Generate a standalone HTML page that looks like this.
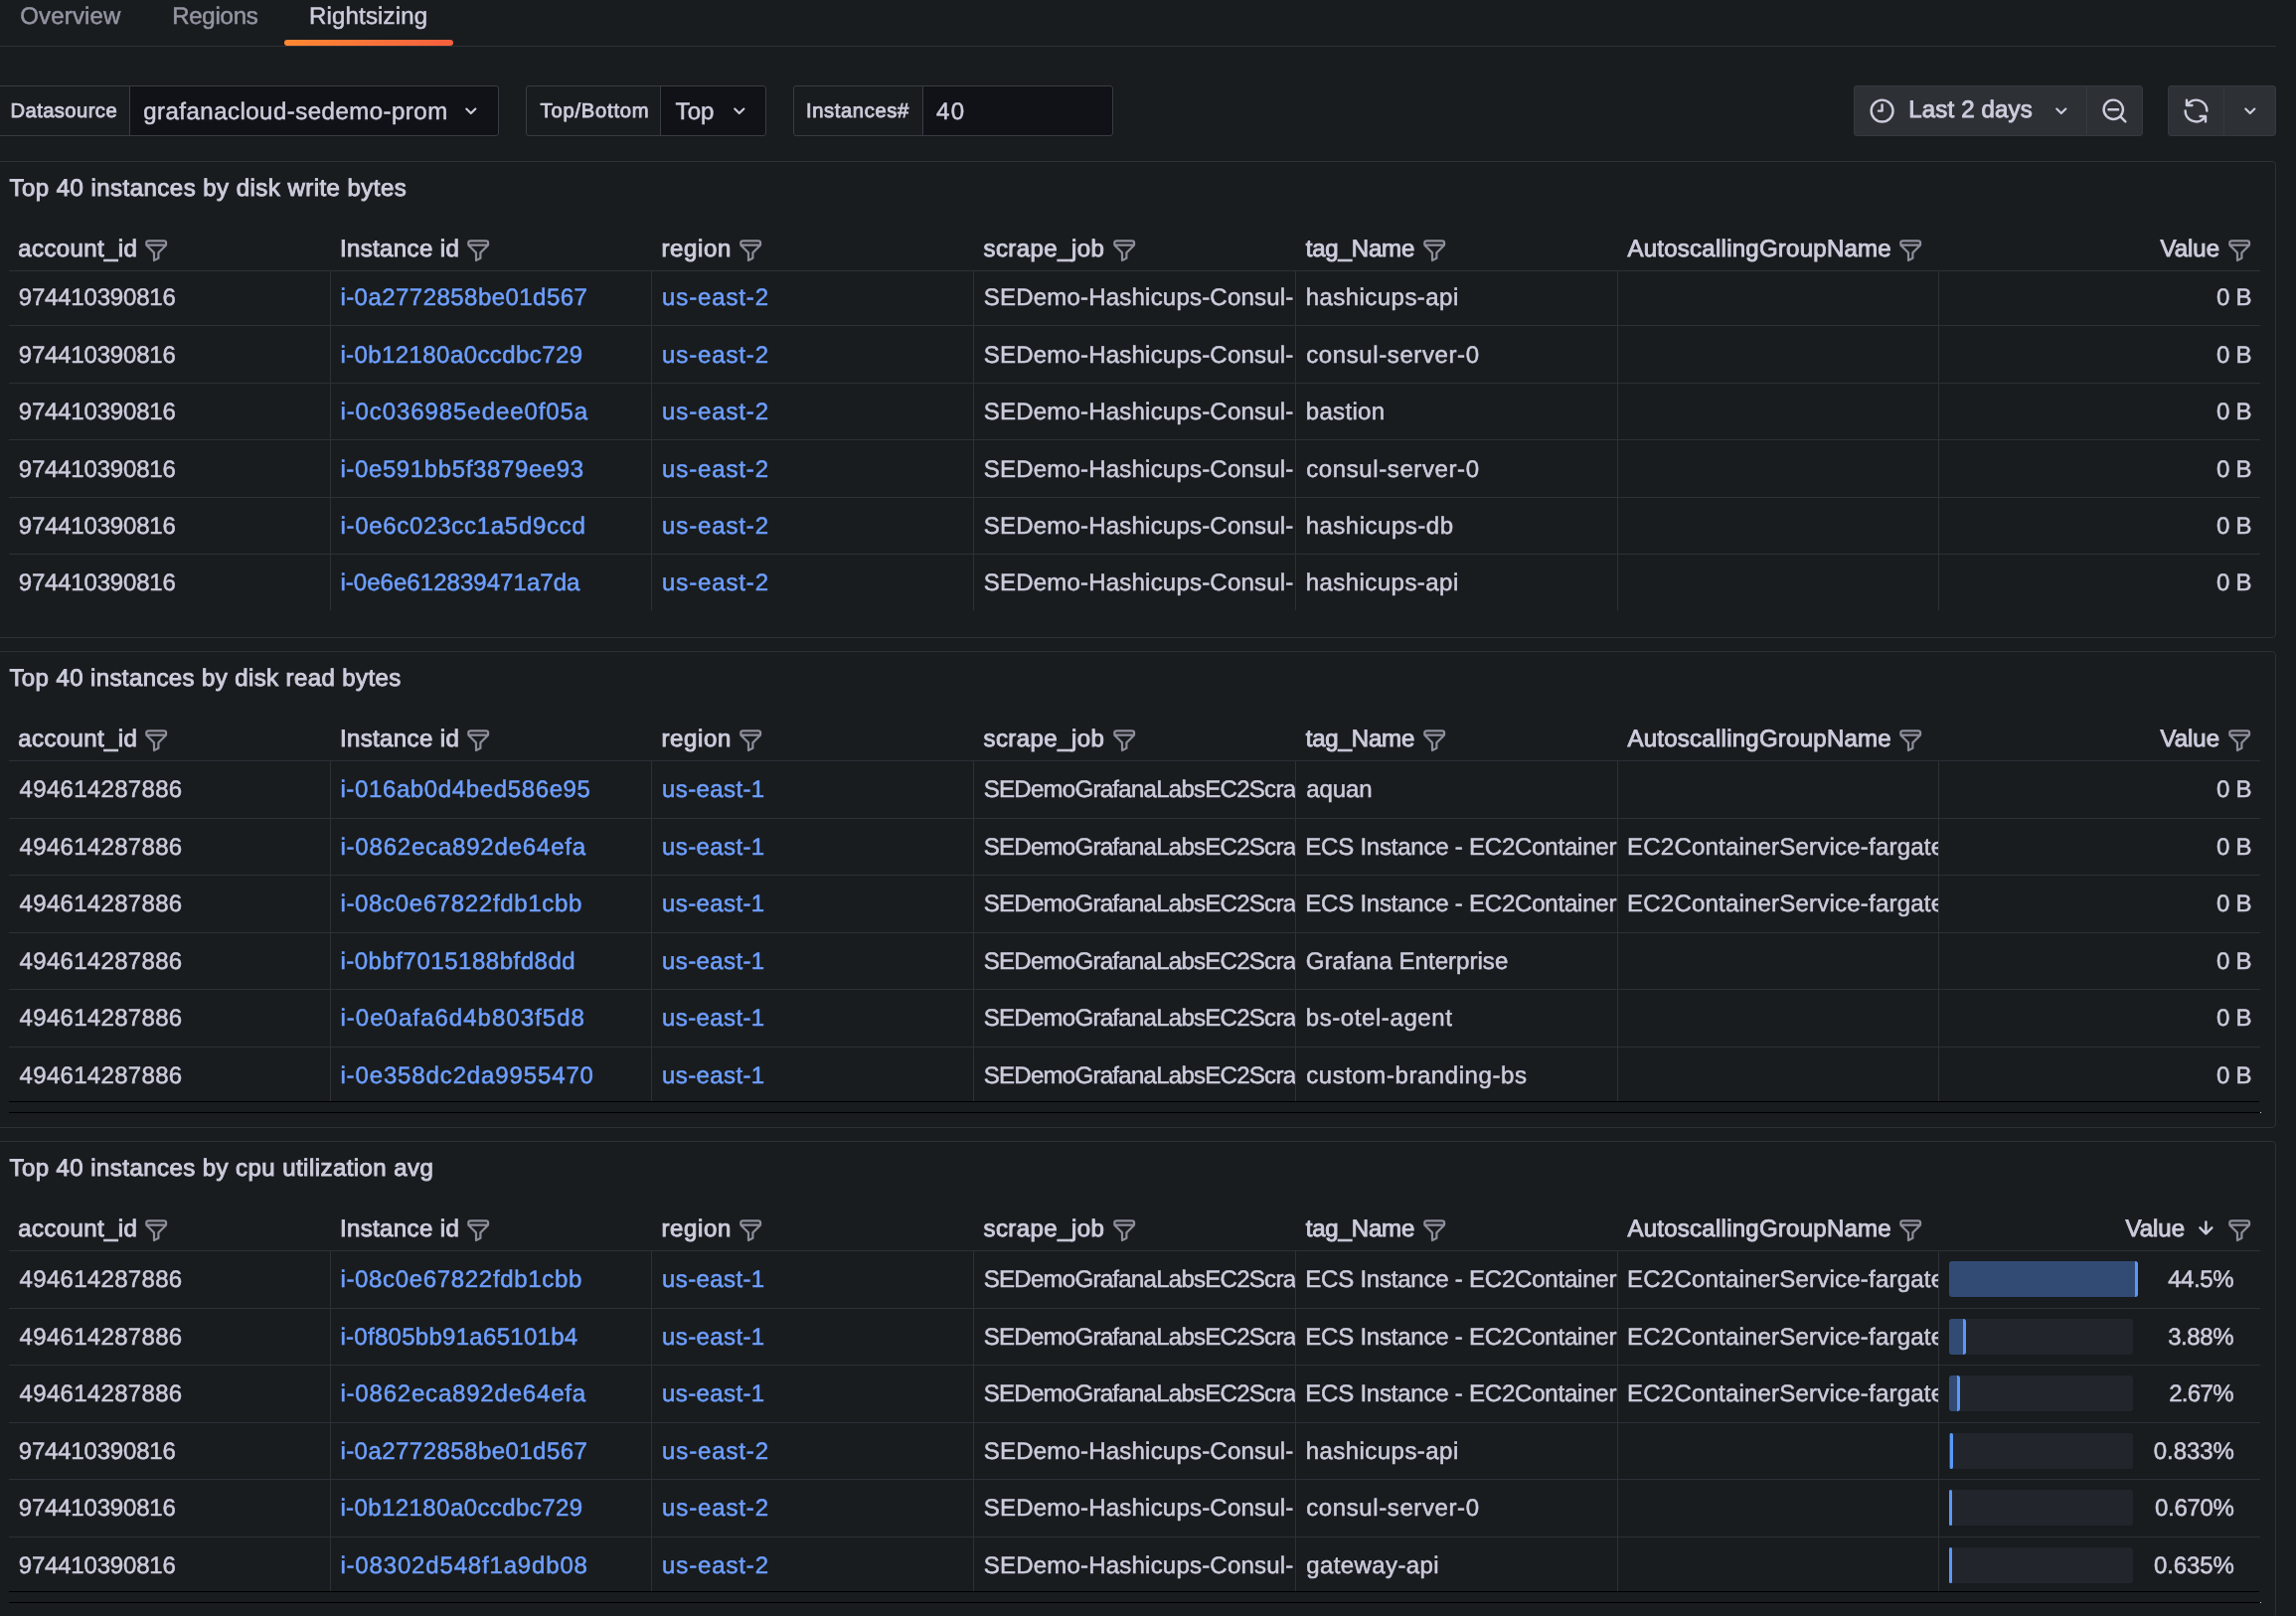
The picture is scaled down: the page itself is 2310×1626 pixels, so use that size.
<!DOCTYPE html>
<html lang="en"><head><meta charset="utf-8"><title>Rightsizing</title>
<style>
*{box-sizing:border-box;margin:0;padding:0}
html,body{width:2310px;height:1626px;overflow:hidden;background:#181c1f;}
body{font-family:"Liberation Sans",sans-serif;color:#ccccdc;position:relative}
div,span,svg,section{position:absolute}
.root{left:0;top:0;width:2310px;height:1626px;will-change:transform}
.tabs,.vars,.tc{left:0;top:0;width:2310px;height:0}
.t{white-space:pre;display:block;text-rendering:geometricPrecision}
.ln{background:#2d3036}
.bl{background:#000}
.dot{width:1.6px;height:1.6px;background:#fff;border-radius:1px}
.ul{border-radius:3px;background:linear-gradient(90deg,#ff8833,#f55f3e)}
.lab{border:1px solid #3a3c43;border-radius:3px 0 0 3px;background:#181c1f}
.sel{border:1px solid #3a3c43;border-radius:0 3px 3px 0;background:#111217}
.btn{background:#2d3035;border:1px solid #363940}
.panel{left:-4px;width:2294px;height:480px;border:1px solid #2d3036;border-radius:4px;background:#181c1f}
.tbl{left:-1px;top:-1px;width:2292px;overflow:hidden}
.row{left:0;width:2292px}
.cell{top:0;height:100%;overflow:hidden;border-right:1px solid #2d3036;box-sizing:content-box}
.cell.last{border-right:0}
.trk{background:#22252b;border-radius:3px}
.fill{background:#324b74;border-radius:3px;overflow:hidden}
.fill i{position:absolute;right:0;top:0;width:3px;height:100%;background:#5a98f8}
</style></head>
<body>
<div class="root">
<div class="tabs">
<div class="ln" style="left:0;top:46px;width:2290px;height:1px"></div>
<div class="ul" style="left:286px;top:40px;width:170px;height:6px"></div>
<span class="t" style="left:20.22px;top:5px;font-size:24px;line-height:24px;letter-spacing:0.167px;color:#9495a2;-webkit-text-stroke:0.5px #9495a2;">Overview</span>
<span class="t" style="left:173.18px;top:5px;font-size:24px;line-height:24px;letter-spacing:-0.245px;color:#9495a2;-webkit-text-stroke:0.5px #9495a2;">Regions</span>
<span class="t" style="left:310.98px;top:5px;font-size:24px;line-height:24px;letter-spacing:0.180px;color:#ccccdc;-webkit-text-stroke:0.5px #ccccdc;">Rightsizing</span>
</div>
<div class="vars">
<div class="lab" style="left:-6px;top:86px;width:137px;height:51px"></div>
<div class="sel" style="left:130px;top:86px;width:372px;height:51px"></div>
<span class="t" style="left:10.47px;top:102px;font-size:20.2px;line-height:20.2px;letter-spacing:0.434px;color:#ccccdc;-webkit-text-stroke:0.8px #ccccdc;">Datasource</span>
<span class="t" style="left:144.18px;top:101px;font-size:24px;line-height:24px;letter-spacing:0.484px;color:#ccccdc;-webkit-text-stroke:0.5px #ccccdc;">grafanacloud-sedemo-prom</span>
<svg class="ic" style="left:461.10px;top:99.30px" width="25.6" height="25.6" viewBox="0 0 24 24"><path fill="#ccccdc" d="M17,9.17a1,1,0,0,0-1.41,0L12,12.71,8.46,9.17a1,1,0,0,0-1.41,0,1,1,0,0,0,0,1.42l4.24,4.24a1,1,0,0,0,1.42,0L17,10.59A1,1,0,0,0,17,9.17Z"/></svg>
<div class="lab" style="left:529px;top:86px;width:136px;height:51px"></div>
<div class="sel" style="left:664px;top:86px;width:107px;height:51px"></div>
<span class="t" style="left:543.56px;top:102px;font-size:20.2px;line-height:20.2px;letter-spacing:0.775px;color:#ccccdc;-webkit-text-stroke:0.8px #ccccdc;">Top/Bottom</span>
<span class="t" style="left:679.58px;top:101px;font-size:24px;line-height:24px;letter-spacing:0.092px;color:#ccccdc;-webkit-text-stroke:0.5px #ccccdc;">Top</span>
<svg class="ic" style="left:730.80px;top:99.30px" width="25.6" height="25.6" viewBox="0 0 24 24"><path fill="#ccccdc" d="M17,9.17a1,1,0,0,0-1.41,0L12,12.71,8.46,9.17a1,1,0,0,0-1.41,0,1,1,0,0,0,0,1.42l4.24,4.24a1,1,0,0,0,1.42,0L17,10.59A1,1,0,0,0,17,9.17Z"/></svg>
<div class="lab" style="left:798px;top:86px;width:131px;height:51px"></div>
<div class="sel" style="left:928px;top:86px;width:192px;height:51px"></div>
<span class="t" style="left:810.97px;top:102px;font-size:20.2px;line-height:20.2px;letter-spacing:0.619px;color:#ccccdc;-webkit-text-stroke:0.8px #ccccdc;">Instances#</span>
<span class="t" style="left:942.08px;top:101px;font-size:24px;line-height:24px;letter-spacing:1.369px;color:#ccccdc;-webkit-text-stroke:0.5px #ccccdc;">40</span>
</div>
<div class="tc">
<div class="btn" style="left:1865px;top:86px;width:235px;height:51px;border-radius:3px 0 0 3px"></div>
<div class="btn" style="left:2099px;top:86px;width:57px;height:51px;border-radius:0 3px 3px 0"></div>
<div class="btn" style="left:2181px;top:86px;width:57px;height:51px;border-radius:3px 0 0 3px"></div>
<div class="btn" style="left:2237px;top:86px;width:53px;height:51px;border-radius:0 3px 3px 0"></div>
<svg class="ic" style="left:1878.60px;top:96.90px" width="29.2" height="29.2" viewBox="0 0 24 24"><path fill="#ccccdc" d="M12,2A10,10,0,1,0,22,12,10.01114,10.01114,0,0,0,12,2Zm0,18a8,8,0,1,1,8-8A8.00917,8.00917,0,0,1,12,20ZM12,6a.99974.99974,0,0,0-1,1v4H9a1,1,0,0,0,0,2h3a.99974.99974,0,0,0,1-1V7A.99974.99974,0,0,0,12,6Z"/></svg>
<span class="t" style="left:1920.37px;top:99px;font-size:24px;line-height:24px;letter-spacing:0.158px;color:#ccccdc;-webkit-text-stroke:0.9px #ccccdc;">Last 2 days</span>
<svg class="ic" style="left:2061.00px;top:99.00px" width="25.6" height="25.6" viewBox="0 0 24 24"><path fill="#ccccdc" d="M17,9.17a1,1,0,0,0-1.41,0L12,12.71,8.46,9.17a1,1,0,0,0-1.41,0,1,1,0,0,0,0,1.42l4.24,4.24a1,1,0,0,0,1.42,0L17,10.59A1,1,0,0,0,17,9.17Z"/></svg>
<svg class="ic" style="left:2112.90px;top:96.90px" width="29.0" height="29.0" viewBox="0 0 24 24"><path fill="#ccccdc" d="M21.71,20.29,18,16.61A9,9,0,1,0,16.61,18l3.68,3.68a1,1,0,0,0,1.42,0A1,1,0,0,0,21.71,20.29ZM11,18a7,7,0,1,1,7-7A7,7,0,0,1,11,18Zm4-8H7a1,1,0,0,0,0,2h8a1,1,0,0,0,0-2Z"/></svg>
<svg class="ic" style="left:2195.00px;top:96.90px" width="29.0" height="29.0" viewBox="0 0 24 24"><path fill="#ccccdc" d="M19.91,15.51H15.38a1,1,0,0,0,0,2h2.4A8,8,0,0,1,4,12a1,1,0,0,0-2,0,10,10,0,0,0,16.88,7.23V21a1,1,0,0,0,2,0V16.5A1,1,0,0,0,19.91,15.51ZM12,2A10,10,0,0,0,5.12,4.77V3a1,1,0,0,0-2,0V7.5a1,1,0,0,0,1,1h4.5a1,1,0,0,0,0-2H6.22A8,8,0,0,1,20,12a1,1,0,0,0,2,0A10,10,0,0,0,12,2Z"/></svg>
<svg class="ic" style="left:2250.70px;top:99.00px" width="25.6" height="25.6" viewBox="0 0 24 24"><path fill="#ccccdc" d="M17,9.17a1,1,0,0,0-1.41,0L12,12.71,8.46,9.17a1,1,0,0,0-1.41,0,1,1,0,0,0,0,1.42l4.24,4.24a1,1,0,0,0,1.42,0L17,10.59A1,1,0,0,0,17,9.17Z"/></svg>
</div>
<section class="panel" style="top:162px">
<span class="t" style="left:12.46px;top:15px;font-size:24px;line-height:24px;letter-spacing:0.471px;color:#ccccdc;-webkit-text-stroke:0.9px #ccccdc;">Top 40 instances by disk write bytes</span>
<div class="tbl" style="height:452px">
<span class="t" style="left:22.25px;top:77px;font-size:24px;line-height:24px;letter-spacing:0.397px;color:#ccccdc;-webkit-text-stroke:0.9px #ccccdc;">account_id</span>
<svg class="ic" style="left:148.10px;top:77.10px" width="26.4" height="26.4" viewBox="0 0 24 24"><path fill="#8d8e9a" d="M19,2H5A3,3,0,0,0,2,5V6.17a3,3,0,0,0,.25,1.2l0,.06a2.81,2.81,0,0,0,.59.86L9,14.41V21a1,1,0,0,0,.47.85A1,1,0,0,0,10,22a1,1,0,0,0,.45-.11l4-2A1,1,0,0,0,15,19V14.41l6.12-6.12a2.81,2.81,0,0,0,.59-.86l0-.06A3,3,0,0,0,22,6.17V5A3,3,0,0,0,19,2ZM13.29,13.29A1,1,0,0,0,13,14v4.38l-2,1V14a1,1,0,0,0-.29-.71L5.41,8H18.59ZM20,6H4V5A1,1,0,0,1,5,4H19a1,1,0,0,1,1,1Z"/></svg>
<span class="t" style="left:345.89px;top:77px;font-size:24px;line-height:24px;letter-spacing:0.383px;color:#ccccdc;-webkit-text-stroke:0.9px #ccccdc;">Instance id</span>
<svg class="ic" style="left:472.00px;top:77.10px" width="26.4" height="26.4" viewBox="0 0 24 24"><path fill="#8d8e9a" d="M19,2H5A3,3,0,0,0,2,5V6.17a3,3,0,0,0,.25,1.2l0,.06a2.81,2.81,0,0,0,.59.86L9,14.41V21a1,1,0,0,0,.47.85A1,1,0,0,0,10,22a1,1,0,0,0,.45-.11l4-2A1,1,0,0,0,15,19V14.41l6.12-6.12a2.81,2.81,0,0,0,.59-.86l0-.06A3,3,0,0,0,22,6.17V5A3,3,0,0,0,19,2ZM13.29,13.29A1,1,0,0,0,13,14v4.38l-2,1V14a1,1,0,0,0-.29-.71L5.41,8H18.59ZM20,6H4V5A1,1,0,0,1,5,4H19a1,1,0,0,1,1,1Z"/></svg>
<span class="t" style="left:669.41px;top:77px;font-size:24px;line-height:24px;letter-spacing:0.660px;color:#ccccdc;-webkit-text-stroke:0.9px #ccccdc;">region</span>
<svg class="ic" style="left:745.60px;top:77.10px" width="26.4" height="26.4" viewBox="0 0 24 24"><path fill="#8d8e9a" d="M19,2H5A3,3,0,0,0,2,5V6.17a3,3,0,0,0,.25,1.2l0,.06a2.81,2.81,0,0,0,.59.86L9,14.41V21a1,1,0,0,0,.47.85A1,1,0,0,0,10,22a1,1,0,0,0,.45-.11l4-2A1,1,0,0,0,15,19V14.41l6.12-6.12a2.81,2.81,0,0,0,.59-.86l0-.06A3,3,0,0,0,22,6.17V5A3,3,0,0,0,19,2ZM13.29,13.29A1,1,0,0,0,13,14v4.38l-2,1V14a1,1,0,0,0-.29-.71L5.41,8H18.59ZM20,6H4V5A1,1,0,0,1,5,4H19a1,1,0,0,1,1,1Z"/></svg>
<span class="t" style="left:993.47px;top:77px;font-size:24px;line-height:24px;letter-spacing:0.440px;color:#ccccdc;-webkit-text-stroke:0.9px #ccccdc;">scrape_job</span>
<svg class="ic" style="left:1121.60px;top:77.10px" width="26.4" height="26.4" viewBox="0 0 24 24"><path fill="#8d8e9a" d="M19,2H5A3,3,0,0,0,2,5V6.17a3,3,0,0,0,.25,1.2l0,.06a2.81,2.81,0,0,0,.59.86L9,14.41V21a1,1,0,0,0,.47.85A1,1,0,0,0,10,22a1,1,0,0,0,.45-.11l4-2A1,1,0,0,0,15,19V14.41l6.12-6.12a2.81,2.81,0,0,0,.59-.86l0-.06A3,3,0,0,0,22,6.17V5A3,3,0,0,0,19,2ZM13.29,13.29A1,1,0,0,0,13,14v4.38l-2,1V14a1,1,0,0,0-.29-.71L5.41,8H18.59ZM20,6H4V5A1,1,0,0,1,5,4H19a1,1,0,0,1,1,1Z"/></svg>
<span class="t" style="left:1317.68px;top:77px;font-size:24px;line-height:24px;letter-spacing:-0.162px;color:#ccccdc;-webkit-text-stroke:0.9px #ccccdc;">tag_Name</span>
<svg class="ic" style="left:1434.10px;top:77.10px" width="26.4" height="26.4" viewBox="0 0 24 24"><path fill="#8d8e9a" d="M19,2H5A3,3,0,0,0,2,5V6.17a3,3,0,0,0,.25,1.2l0,.06a2.81,2.81,0,0,0,.59.86L9,14.41V21a1,1,0,0,0,.47.85A1,1,0,0,0,10,22a1,1,0,0,0,.45-.11l4-2A1,1,0,0,0,15,19V14.41l6.12-6.12a2.81,2.81,0,0,0,.59-.86l0-.06A3,3,0,0,0,22,6.17V5A3,3,0,0,0,19,2ZM13.29,13.29A1,1,0,0,0,13,14v4.38l-2,1V14a1,1,0,0,0-.29-.71L5.41,8H18.59ZM20,6H4V5A1,1,0,0,1,5,4H19a1,1,0,0,1,1,1Z"/></svg>
<span class="t" style="left:1641.43px;top:77px;font-size:24px;line-height:24px;letter-spacing:0.258px;color:#ccccdc;-webkit-text-stroke:0.9px #ccccdc;">AutoscallingGroupName</span>
<svg class="ic" style="left:1913.40px;top:77.10px" width="26.4" height="26.4" viewBox="0 0 24 24"><path fill="#8d8e9a" d="M19,2H5A3,3,0,0,0,2,5V6.17a3,3,0,0,0,.25,1.2l0,.06a2.81,2.81,0,0,0,.59.86L9,14.41V21a1,1,0,0,0,.47.85A1,1,0,0,0,10,22a1,1,0,0,0,.45-.11l4-2A1,1,0,0,0,15,19V14.41l6.12-6.12a2.81,2.81,0,0,0,.59-.86l0-.06A3,3,0,0,0,22,6.17V5A3,3,0,0,0,19,2ZM13.29,13.29A1,1,0,0,0,13,14v4.38l-2,1V14a1,1,0,0,0-.29-.71L5.41,8H18.59ZM20,6H4V5A1,1,0,0,1,5,4H19a1,1,0,0,1,1,1Z"/></svg>
<span class="t" style="left:2177.42px;top:77px;font-size:24px;line-height:24px;letter-spacing:0.003px;color:#ccccdc;-webkit-text-stroke:0.9px #ccccdc;">Value</span>
<svg class="ic" style="left:2243.50px;top:77.10px" width="26.4" height="26.4" viewBox="0 0 24 24"><path fill="#8d8e9a" d="M19,2H5A3,3,0,0,0,2,5V6.17a3,3,0,0,0,.25,1.2l0,.06a2.81,2.81,0,0,0,.59.86L9,14.41V21a1,1,0,0,0,.47.85A1,1,0,0,0,10,22a1,1,0,0,0,.45-.11l4-2A1,1,0,0,0,15,19V14.41l6.12-6.12a2.81,2.81,0,0,0,.59-.86l0-.06A3,3,0,0,0,22,6.17V5A3,3,0,0,0,19,2ZM13.29,13.29A1,1,0,0,0,13,14v4.38l-2,1V14a1,1,0,0,0-.29-.71L5.41,8H18.59ZM20,6H4V5A1,1,0,0,1,5,4H19a1,1,0,0,1,1,1Z"/></svg>
<div class="ln" style="left:13px;top:110px;width:2265px;height:1px"></div>
<div class="row" style="top:111px;height:54px">
<div class="cell" style="left:13px;width:323px">
<span class="t" style="left:9.72px;top:15px;font-size:24px;line-height:24px;letter-spacing:-0.185px;color:#ccccdc;-webkit-text-stroke:0.5px #ccccdc;">974410390816</span>
</div>
<div class="cell" style="left:337px;width:322px">
<span class="t" style="left:9.38px;top:15px;font-size:24px;line-height:24px;letter-spacing:0.459px;color:#6e9fff;-webkit-text-stroke:0.5px #6e9fff;">i-0a2772858be01d567</span>
</div>
<div class="cell" style="left:660px;width:323px">
<span class="t" style="left:10.08px;top:15px;font-size:24px;line-height:24px;letter-spacing:0.857px;color:#6e9fff;-webkit-text-stroke:0.5px #6e9fff;">us-east-2</span>
</div>
<div class="cell" style="left:984px;width:323px">
<span class="t" style="left:9.79px;top:15px;font-size:24px;line-height:24px;letter-spacing:0.206px;color:#ccccdc;-webkit-text-stroke:0.5px #ccccdc;">SEDemo-Hashicups-Consul-</span>
</div>
<div class="cell" style="left:1308px;width:323px">
<span class="t" style="left:9.64px;top:15px;font-size:24px;line-height:24px;letter-spacing:0.462px;color:#ccccdc;-webkit-text-stroke:0.5px #ccccdc;">hashicups-api</span>
</div>
<div class="cell" style="left:1632px;width:322px">
</div>
<div class="cell last" style="left:1955px;width:323px">
<span class="t" style="left:279.09px;top:15px;font-size:24px;line-height:24px;letter-spacing:-0.283px;color:#ccccdc;-webkit-text-stroke:0.5px #ccccdc;">0 B</span>
</div>
</div>
<div class="ln" style="left:13px;top:165px;width:2265px;height:1px"></div>
<div class="row" style="top:166px;height:57px">
<div class="cell" style="left:13px;width:323px">
<span class="t" style="left:9.72px;top:18px;font-size:24px;line-height:24px;letter-spacing:-0.185px;color:#ccccdc;-webkit-text-stroke:0.5px #ccccdc;">974410390816</span>
</div>
<div class="cell" style="left:337px;width:322px">
<span class="t" style="left:9.38px;top:18px;font-size:24px;line-height:24px;letter-spacing:0.416px;color:#6e9fff;-webkit-text-stroke:0.5px #6e9fff;">i-0b12180a0ccdbc729</span>
</div>
<div class="cell" style="left:660px;width:323px">
<span class="t" style="left:10.08px;top:18px;font-size:24px;line-height:24px;letter-spacing:0.857px;color:#6e9fff;-webkit-text-stroke:0.5px #6e9fff;">us-east-2</span>
</div>
<div class="cell" style="left:984px;width:323px">
<span class="t" style="left:9.79px;top:18px;font-size:24px;line-height:24px;letter-spacing:0.206px;color:#ccccdc;-webkit-text-stroke:0.5px #ccccdc;">SEDemo-Hashicups-Consul-</span>
</div>
<div class="cell" style="left:1308px;width:323px">
<span class="t" style="left:10.17px;top:18px;font-size:24px;line-height:24px;letter-spacing:0.607px;color:#ccccdc;-webkit-text-stroke:0.5px #ccccdc;">consul-server-0</span>
</div>
<div class="cell" style="left:1632px;width:322px">
</div>
<div class="cell last" style="left:1955px;width:323px">
<span class="t" style="left:279.09px;top:18px;font-size:24px;line-height:24px;letter-spacing:-0.283px;color:#ccccdc;-webkit-text-stroke:0.5px #ccccdc;">0 B</span>
</div>
</div>
<div class="ln" style="left:13px;top:223px;width:2265px;height:1px"></div>
<div class="row" style="top:224px;height:56px">
<div class="cell" style="left:13px;width:323px">
<span class="t" style="left:9.72px;top:17px;font-size:24px;line-height:24px;letter-spacing:-0.185px;color:#ccccdc;-webkit-text-stroke:0.5px #ccccdc;">974410390816</span>
</div>
<div class="cell" style="left:337px;width:322px">
<span class="t" style="left:9.38px;top:17px;font-size:24px;line-height:24px;letter-spacing:0.924px;color:#6e9fff;-webkit-text-stroke:0.5px #6e9fff;">i-0c036985edee0f05a</span>
</div>
<div class="cell" style="left:660px;width:323px">
<span class="t" style="left:10.08px;top:17px;font-size:24px;line-height:24px;letter-spacing:0.857px;color:#6e9fff;-webkit-text-stroke:0.5px #6e9fff;">us-east-2</span>
</div>
<div class="cell" style="left:984px;width:323px">
<span class="t" style="left:9.79px;top:17px;font-size:24px;line-height:24px;letter-spacing:0.206px;color:#ccccdc;-webkit-text-stroke:0.5px #ccccdc;">SEDemo-Hashicups-Consul-</span>
</div>
<div class="cell" style="left:1308px;width:323px">
<span class="t" style="left:9.69px;top:17px;font-size:24px;line-height:24px;letter-spacing:0.345px;color:#ccccdc;-webkit-text-stroke:0.5px #ccccdc;">bastion</span>
</div>
<div class="cell" style="left:1632px;width:322px">
</div>
<div class="cell last" style="left:1955px;width:323px">
<span class="t" style="left:279.09px;top:17px;font-size:24px;line-height:24px;letter-spacing:-0.283px;color:#ccccdc;-webkit-text-stroke:0.5px #ccccdc;">0 B</span>
</div>
</div>
<div class="ln" style="left:13px;top:280px;width:2265px;height:1px"></div>
<div class="row" style="top:281px;height:57px">
<div class="cell" style="left:13px;width:323px">
<span class="t" style="left:9.72px;top:18px;font-size:24px;line-height:24px;letter-spacing:-0.185px;color:#ccccdc;-webkit-text-stroke:0.5px #ccccdc;">974410390816</span>
</div>
<div class="cell" style="left:337px;width:322px">
<span class="t" style="left:9.38px;top:18px;font-size:24px;line-height:24px;letter-spacing:0.624px;color:#6e9fff;-webkit-text-stroke:0.5px #6e9fff;">i-0e591bb5f3879ee93</span>
</div>
<div class="cell" style="left:660px;width:323px">
<span class="t" style="left:10.08px;top:18px;font-size:24px;line-height:24px;letter-spacing:0.857px;color:#6e9fff;-webkit-text-stroke:0.5px #6e9fff;">us-east-2</span>
</div>
<div class="cell" style="left:984px;width:323px">
<span class="t" style="left:9.79px;top:18px;font-size:24px;line-height:24px;letter-spacing:0.206px;color:#ccccdc;-webkit-text-stroke:0.5px #ccccdc;">SEDemo-Hashicups-Consul-</span>
</div>
<div class="cell" style="left:1308px;width:323px">
<span class="t" style="left:10.17px;top:18px;font-size:24px;line-height:24px;letter-spacing:0.607px;color:#ccccdc;-webkit-text-stroke:0.5px #ccccdc;">consul-server-0</span>
</div>
<div class="cell" style="left:1632px;width:322px">
</div>
<div class="cell last" style="left:1955px;width:323px">
<span class="t" style="left:279.09px;top:18px;font-size:24px;line-height:24px;letter-spacing:-0.283px;color:#ccccdc;-webkit-text-stroke:0.5px #ccccdc;">0 B</span>
</div>
</div>
<div class="ln" style="left:13px;top:338px;width:2265px;height:1px"></div>
<div class="row" style="top:339px;height:56px">
<div class="cell" style="left:13px;width:323px">
<span class="t" style="left:9.72px;top:17px;font-size:24px;line-height:24px;letter-spacing:-0.185px;color:#ccccdc;-webkit-text-stroke:0.5px #ccccdc;">974410390816</span>
</div>
<div class="cell" style="left:337px;width:322px">
<span class="t" style="left:9.38px;top:17px;font-size:24px;line-height:24px;letter-spacing:0.722px;color:#6e9fff;-webkit-text-stroke:0.5px #6e9fff;">i-0e6c023cc1a5d9ccd</span>
</div>
<div class="cell" style="left:660px;width:323px">
<span class="t" style="left:10.08px;top:17px;font-size:24px;line-height:24px;letter-spacing:0.857px;color:#6e9fff;-webkit-text-stroke:0.5px #6e9fff;">us-east-2</span>
</div>
<div class="cell" style="left:984px;width:323px">
<span class="t" style="left:9.79px;top:17px;font-size:24px;line-height:24px;letter-spacing:0.206px;color:#ccccdc;-webkit-text-stroke:0.5px #ccccdc;">SEDemo-Hashicups-Consul-</span>
</div>
<div class="cell" style="left:1308px;width:323px">
<span class="t" style="left:9.64px;top:17px;font-size:24px;line-height:24px;letter-spacing:0.512px;color:#ccccdc;-webkit-text-stroke:0.5px #ccccdc;">hashicups-db</span>
</div>
<div class="cell" style="left:1632px;width:322px">
</div>
<div class="cell last" style="left:1955px;width:323px">
<span class="t" style="left:279.09px;top:17px;font-size:24px;line-height:24px;letter-spacing:-0.283px;color:#ccccdc;-webkit-text-stroke:0.5px #ccccdc;">0 B</span>
</div>
</div>
<div class="ln" style="left:13px;top:395px;width:2265px;height:1px"></div>
<div class="row" style="top:396px;height:56px">
<div class="cell" style="left:13px;width:323px">
<span class="t" style="left:9.72px;top:17px;font-size:24px;line-height:24px;letter-spacing:-0.185px;color:#ccccdc;-webkit-text-stroke:0.5px #ccccdc;">974410390816</span>
</div>
<div class="cell" style="left:337px;width:322px">
<span class="t" style="left:9.38px;top:17px;font-size:24px;line-height:24px;letter-spacing:0.044px;color:#6e9fff;-webkit-text-stroke:0.5px #6e9fff;">i-0e6e612839471a7da</span>
</div>
<div class="cell" style="left:660px;width:323px">
<span class="t" style="left:10.08px;top:17px;font-size:24px;line-height:24px;letter-spacing:0.857px;color:#6e9fff;-webkit-text-stroke:0.5px #6e9fff;">us-east-2</span>
</div>
<div class="cell" style="left:984px;width:323px">
<span class="t" style="left:9.79px;top:17px;font-size:24px;line-height:24px;letter-spacing:0.206px;color:#ccccdc;-webkit-text-stroke:0.5px #ccccdc;">SEDemo-Hashicups-Consul-</span>
</div>
<div class="cell" style="left:1308px;width:323px">
<span class="t" style="left:9.64px;top:17px;font-size:24px;line-height:24px;letter-spacing:0.462px;color:#ccccdc;-webkit-text-stroke:0.5px #ccccdc;">hashicups-api</span>
</div>
<div class="cell" style="left:1632px;width:322px">
</div>
<div class="cell last" style="left:1955px;width:323px">
<span class="t" style="left:279.09px;top:17px;font-size:24px;line-height:24px;letter-spacing:-0.283px;color:#ccccdc;-webkit-text-stroke:0.5px #ccccdc;">0 B</span>
</div>
</div>
</div>
</section>
<section class="panel" style="top:655px">
<span class="t" style="left:12.46px;top:15px;font-size:24px;line-height:24px;letter-spacing:0.398px;color:#ccccdc;-webkit-text-stroke:0.9px #ccccdc;">Top 40 instances by disk read bytes</span>
<div class="tbl" style="height:465px">
<span class="t" style="left:22.25px;top:77px;font-size:24px;line-height:24px;letter-spacing:0.397px;color:#ccccdc;-webkit-text-stroke:0.9px #ccccdc;">account_id</span>
<svg class="ic" style="left:148.10px;top:77.10px" width="26.4" height="26.4" viewBox="0 0 24 24"><path fill="#8d8e9a" d="M19,2H5A3,3,0,0,0,2,5V6.17a3,3,0,0,0,.25,1.2l0,.06a2.81,2.81,0,0,0,.59.86L9,14.41V21a1,1,0,0,0,.47.85A1,1,0,0,0,10,22a1,1,0,0,0,.45-.11l4-2A1,1,0,0,0,15,19V14.41l6.12-6.12a2.81,2.81,0,0,0,.59-.86l0-.06A3,3,0,0,0,22,6.17V5A3,3,0,0,0,19,2ZM13.29,13.29A1,1,0,0,0,13,14v4.38l-2,1V14a1,1,0,0,0-.29-.71L5.41,8H18.59ZM20,6H4V5A1,1,0,0,1,5,4H19a1,1,0,0,1,1,1Z"/></svg>
<span class="t" style="left:345.89px;top:77px;font-size:24px;line-height:24px;letter-spacing:0.383px;color:#ccccdc;-webkit-text-stroke:0.9px #ccccdc;">Instance id</span>
<svg class="ic" style="left:472.00px;top:77.10px" width="26.4" height="26.4" viewBox="0 0 24 24"><path fill="#8d8e9a" d="M19,2H5A3,3,0,0,0,2,5V6.17a3,3,0,0,0,.25,1.2l0,.06a2.81,2.81,0,0,0,.59.86L9,14.41V21a1,1,0,0,0,.47.85A1,1,0,0,0,10,22a1,1,0,0,0,.45-.11l4-2A1,1,0,0,0,15,19V14.41l6.12-6.12a2.81,2.81,0,0,0,.59-.86l0-.06A3,3,0,0,0,22,6.17V5A3,3,0,0,0,19,2ZM13.29,13.29A1,1,0,0,0,13,14v4.38l-2,1V14a1,1,0,0,0-.29-.71L5.41,8H18.59ZM20,6H4V5A1,1,0,0,1,5,4H19a1,1,0,0,1,1,1Z"/></svg>
<span class="t" style="left:669.41px;top:77px;font-size:24px;line-height:24px;letter-spacing:0.660px;color:#ccccdc;-webkit-text-stroke:0.9px #ccccdc;">region</span>
<svg class="ic" style="left:745.60px;top:77.10px" width="26.4" height="26.4" viewBox="0 0 24 24"><path fill="#8d8e9a" d="M19,2H5A3,3,0,0,0,2,5V6.17a3,3,0,0,0,.25,1.2l0,.06a2.81,2.81,0,0,0,.59.86L9,14.41V21a1,1,0,0,0,.47.85A1,1,0,0,0,10,22a1,1,0,0,0,.45-.11l4-2A1,1,0,0,0,15,19V14.41l6.12-6.12a2.81,2.81,0,0,0,.59-.86l0-.06A3,3,0,0,0,22,6.17V5A3,3,0,0,0,19,2ZM13.29,13.29A1,1,0,0,0,13,14v4.38l-2,1V14a1,1,0,0,0-.29-.71L5.41,8H18.59ZM20,6H4V5A1,1,0,0,1,5,4H19a1,1,0,0,1,1,1Z"/></svg>
<span class="t" style="left:993.47px;top:77px;font-size:24px;line-height:24px;letter-spacing:0.440px;color:#ccccdc;-webkit-text-stroke:0.9px #ccccdc;">scrape_job</span>
<svg class="ic" style="left:1121.60px;top:77.10px" width="26.4" height="26.4" viewBox="0 0 24 24"><path fill="#8d8e9a" d="M19,2H5A3,3,0,0,0,2,5V6.17a3,3,0,0,0,.25,1.2l0,.06a2.81,2.81,0,0,0,.59.86L9,14.41V21a1,1,0,0,0,.47.85A1,1,0,0,0,10,22a1,1,0,0,0,.45-.11l4-2A1,1,0,0,0,15,19V14.41l6.12-6.12a2.81,2.81,0,0,0,.59-.86l0-.06A3,3,0,0,0,22,6.17V5A3,3,0,0,0,19,2ZM13.29,13.29A1,1,0,0,0,13,14v4.38l-2,1V14a1,1,0,0,0-.29-.71L5.41,8H18.59ZM20,6H4V5A1,1,0,0,1,5,4H19a1,1,0,0,1,1,1Z"/></svg>
<span class="t" style="left:1317.68px;top:77px;font-size:24px;line-height:24px;letter-spacing:-0.162px;color:#ccccdc;-webkit-text-stroke:0.9px #ccccdc;">tag_Name</span>
<svg class="ic" style="left:1434.10px;top:77.10px" width="26.4" height="26.4" viewBox="0 0 24 24"><path fill="#8d8e9a" d="M19,2H5A3,3,0,0,0,2,5V6.17a3,3,0,0,0,.25,1.2l0,.06a2.81,2.81,0,0,0,.59.86L9,14.41V21a1,1,0,0,0,.47.85A1,1,0,0,0,10,22a1,1,0,0,0,.45-.11l4-2A1,1,0,0,0,15,19V14.41l6.12-6.12a2.81,2.81,0,0,0,.59-.86l0-.06A3,3,0,0,0,22,6.17V5A3,3,0,0,0,19,2ZM13.29,13.29A1,1,0,0,0,13,14v4.38l-2,1V14a1,1,0,0,0-.29-.71L5.41,8H18.59ZM20,6H4V5A1,1,0,0,1,5,4H19a1,1,0,0,1,1,1Z"/></svg>
<span class="t" style="left:1641.43px;top:77px;font-size:24px;line-height:24px;letter-spacing:0.258px;color:#ccccdc;-webkit-text-stroke:0.9px #ccccdc;">AutoscallingGroupName</span>
<svg class="ic" style="left:1913.40px;top:77.10px" width="26.4" height="26.4" viewBox="0 0 24 24"><path fill="#8d8e9a" d="M19,2H5A3,3,0,0,0,2,5V6.17a3,3,0,0,0,.25,1.2l0,.06a2.81,2.81,0,0,0,.59.86L9,14.41V21a1,1,0,0,0,.47.85A1,1,0,0,0,10,22a1,1,0,0,0,.45-.11l4-2A1,1,0,0,0,15,19V14.41l6.12-6.12a2.81,2.81,0,0,0,.59-.86l0-.06A3,3,0,0,0,22,6.17V5A3,3,0,0,0,19,2ZM13.29,13.29A1,1,0,0,0,13,14v4.38l-2,1V14a1,1,0,0,0-.29-.71L5.41,8H18.59ZM20,6H4V5A1,1,0,0,1,5,4H19a1,1,0,0,1,1,1Z"/></svg>
<span class="t" style="left:2177.42px;top:77px;font-size:24px;line-height:24px;letter-spacing:0.003px;color:#ccccdc;-webkit-text-stroke:0.9px #ccccdc;">Value</span>
<svg class="ic" style="left:2243.50px;top:77.10px" width="26.4" height="26.4" viewBox="0 0 24 24"><path fill="#8d8e9a" d="M19,2H5A3,3,0,0,0,2,5V6.17a3,3,0,0,0,.25,1.2l0,.06a2.81,2.81,0,0,0,.59.86L9,14.41V21a1,1,0,0,0,.47.85A1,1,0,0,0,10,22a1,1,0,0,0,.45-.11l4-2A1,1,0,0,0,15,19V14.41l6.12-6.12a2.81,2.81,0,0,0,.59-.86l0-.06A3,3,0,0,0,22,6.17V5A3,3,0,0,0,19,2ZM13.29,13.29A1,1,0,0,0,13,14v4.38l-2,1V14a1,1,0,0,0-.29-.71L5.41,8H18.59ZM20,6H4V5A1,1,0,0,1,5,4H19a1,1,0,0,1,1,1Z"/></svg>
<div class="ln" style="left:13px;top:110px;width:2265px;height:1px"></div>
<div class="row" style="top:111px;height:57px">
<div class="cell" style="left:13px;width:323px">
<span class="t" style="left:10.58px;top:17px;font-size:24px;line-height:24px;letter-spacing:0.309px;color:#ccccdc;-webkit-text-stroke:0.5px #ccccdc;">494614287886</span>
</div>
<div class="cell" style="left:337px;width:322px">
<span class="t" style="left:9.38px;top:17px;font-size:24px;line-height:24px;letter-spacing:0.629px;color:#6e9fff;-webkit-text-stroke:0.5px #6e9fff;">i-016ab0d4bed586e95</span>
</div>
<div class="cell" style="left:660px;width:323px">
<span class="t" style="left:10.08px;top:17px;font-size:24px;line-height:24px;letter-spacing:0.380px;color:#6e9fff;-webkit-text-stroke:0.5px #6e9fff;">us-east-1</span>
</div>
<div class="cell" style="left:984px;width:323px">
<span class="t" style="left:9.79px;top:17px;font-size:24px;line-height:24px;letter-spacing:-0.722px;color:#ccccdc;-webkit-text-stroke:0.5px #ccccdc;">SEDemoGrafanaLabsEC2Scra</span>
</div>
<div class="cell" style="left:1308px;width:323px">
<span class="t" style="left:10.15px;top:17px;font-size:24px;line-height:24px;letter-spacing:-0.044px;color:#ccccdc;-webkit-text-stroke:0.5px #ccccdc;">aquan</span>
</div>
<div class="cell" style="left:1632px;width:322px">
</div>
<div class="cell last" style="left:1955px;width:323px">
<span class="t" style="left:279.09px;top:17px;font-size:24px;line-height:24px;letter-spacing:-0.283px;color:#ccccdc;-webkit-text-stroke:0.5px #ccccdc;">0 B</span>
</div>
</div>
<div class="ln" style="left:13px;top:168px;width:2265px;height:1px"></div>
<div class="row" style="top:169px;height:56px">
<div class="cell" style="left:13px;width:323px">
<span class="t" style="left:10.58px;top:17px;font-size:24px;line-height:24px;letter-spacing:0.309px;color:#ccccdc;-webkit-text-stroke:0.5px #ccccdc;">494614287886</span>
</div>
<div class="cell" style="left:337px;width:322px">
<span class="t" style="left:9.38px;top:17px;font-size:24px;line-height:24px;letter-spacing:0.808px;color:#6e9fff;-webkit-text-stroke:0.5px #6e9fff;">i-0862eca892de64efa</span>
</div>
<div class="cell" style="left:660px;width:323px">
<span class="t" style="left:10.08px;top:17px;font-size:24px;line-height:24px;letter-spacing:0.380px;color:#6e9fff;-webkit-text-stroke:0.5px #6e9fff;">us-east-1</span>
</div>
<div class="cell" style="left:984px;width:323px">
<span class="t" style="left:9.79px;top:17px;font-size:24px;line-height:24px;letter-spacing:-0.722px;color:#ccccdc;-webkit-text-stroke:0.5px #ccccdc;">SEDemoGrafanaLabsEC2Scra</span>
</div>
<div class="cell" style="left:1308px;width:323px">
<span class="t" style="left:9.28px;top:17px;font-size:24px;line-height:24px;letter-spacing:-0.217px;color:#ccccdc;-webkit-text-stroke:0.5px #ccccdc;">ECS Instance - EC2Container</span>
</div>
<div class="cell" style="left:1632px;width:322px">
<span class="t" style="left:9.08px;top:17px;font-size:24px;line-height:24px;letter-spacing:0.208px;color:#ccccdc;-webkit-text-stroke:0.5px #ccccdc;">EC2ContainerService-fargate</span>
</div>
<div class="cell last" style="left:1955px;width:323px">
<span class="t" style="left:279.09px;top:17px;font-size:24px;line-height:24px;letter-spacing:-0.283px;color:#ccccdc;-webkit-text-stroke:0.5px #ccccdc;">0 B</span>
</div>
</div>
<div class="ln" style="left:13px;top:225px;width:2265px;height:1px"></div>
<div class="row" style="top:226px;height:57px">
<div class="cell" style="left:13px;width:323px">
<span class="t" style="left:10.58px;top:17px;font-size:24px;line-height:24px;letter-spacing:0.309px;color:#ccccdc;-webkit-text-stroke:0.5px #ccccdc;">494614287886</span>
</div>
<div class="cell" style="left:337px;width:322px">
<span class="t" style="left:9.38px;top:17px;font-size:24px;line-height:24px;letter-spacing:0.672px;color:#6e9fff;-webkit-text-stroke:0.5px #6e9fff;">i-08c0e67822fdb1cbb</span>
</div>
<div class="cell" style="left:660px;width:323px">
<span class="t" style="left:10.08px;top:17px;font-size:24px;line-height:24px;letter-spacing:0.380px;color:#6e9fff;-webkit-text-stroke:0.5px #6e9fff;">us-east-1</span>
</div>
<div class="cell" style="left:984px;width:323px">
<span class="t" style="left:9.79px;top:17px;font-size:24px;line-height:24px;letter-spacing:-0.722px;color:#ccccdc;-webkit-text-stroke:0.5px #ccccdc;">SEDemoGrafanaLabsEC2Scra</span>
</div>
<div class="cell" style="left:1308px;width:323px">
<span class="t" style="left:9.28px;top:17px;font-size:24px;line-height:24px;letter-spacing:-0.217px;color:#ccccdc;-webkit-text-stroke:0.5px #ccccdc;">ECS Instance - EC2Container</span>
</div>
<div class="cell" style="left:1632px;width:322px">
<span class="t" style="left:9.08px;top:17px;font-size:24px;line-height:24px;letter-spacing:0.208px;color:#ccccdc;-webkit-text-stroke:0.5px #ccccdc;">EC2ContainerService-fargate</span>
</div>
<div class="cell last" style="left:1955px;width:323px">
<span class="t" style="left:279.09px;top:17px;font-size:24px;line-height:24px;letter-spacing:-0.283px;color:#ccccdc;-webkit-text-stroke:0.5px #ccccdc;">0 B</span>
</div>
</div>
<div class="ln" style="left:13px;top:283px;width:2265px;height:1px"></div>
<div class="row" style="top:284px;height:56px">
<div class="cell" style="left:13px;width:323px">
<span class="t" style="left:10.58px;top:17px;font-size:24px;line-height:24px;letter-spacing:0.309px;color:#ccccdc;-webkit-text-stroke:0.5px #ccccdc;">494614287886</span>
</div>
<div class="cell" style="left:337px;width:322px">
<span class="t" style="left:9.38px;top:17px;font-size:24px;line-height:24px;letter-spacing:0.523px;color:#6e9fff;-webkit-text-stroke:0.5px #6e9fff;">i-0bbf7015188bfd8dd</span>
</div>
<div class="cell" style="left:660px;width:323px">
<span class="t" style="left:10.08px;top:17px;font-size:24px;line-height:24px;letter-spacing:0.380px;color:#6e9fff;-webkit-text-stroke:0.5px #6e9fff;">us-east-1</span>
</div>
<div class="cell" style="left:984px;width:323px">
<span class="t" style="left:9.79px;top:17px;font-size:24px;line-height:24px;letter-spacing:-0.722px;color:#ccccdc;-webkit-text-stroke:0.5px #ccccdc;">SEDemoGrafanaLabsEC2Scra</span>
</div>
<div class="cell" style="left:1308px;width:323px">
<span class="t" style="left:9.81px;top:17px;font-size:24px;line-height:24px;letter-spacing:0.039px;color:#ccccdc;-webkit-text-stroke:0.5px #ccccdc;">Grafana Enterprise</span>
</div>
<div class="cell" style="left:1632px;width:322px">
</div>
<div class="cell last" style="left:1955px;width:323px">
<span class="t" style="left:279.09px;top:17px;font-size:24px;line-height:24px;letter-spacing:-0.283px;color:#ccccdc;-webkit-text-stroke:0.5px #ccccdc;">0 B</span>
</div>
</div>
<div class="ln" style="left:13px;top:340px;width:2265px;height:1px"></div>
<div class="row" style="top:341px;height:57px">
<div class="cell" style="left:13px;width:323px">
<span class="t" style="left:10.58px;top:17px;font-size:24px;line-height:24px;letter-spacing:0.309px;color:#ccccdc;-webkit-text-stroke:0.5px #ccccdc;">494614287886</span>
</div>
<div class="cell" style="left:337px;width:322px">
<span class="t" style="left:9.38px;top:17px;font-size:24px;line-height:24px;letter-spacing:1.034px;color:#6e9fff;-webkit-text-stroke:0.5px #6e9fff;">i-0e0afa6d4b803f5d8</span>
</div>
<div class="cell" style="left:660px;width:323px">
<span class="t" style="left:10.08px;top:17px;font-size:24px;line-height:24px;letter-spacing:0.380px;color:#6e9fff;-webkit-text-stroke:0.5px #6e9fff;">us-east-1</span>
</div>
<div class="cell" style="left:984px;width:323px">
<span class="t" style="left:9.79px;top:17px;font-size:24px;line-height:24px;letter-spacing:-0.722px;color:#ccccdc;-webkit-text-stroke:0.5px #ccccdc;">SEDemoGrafanaLabsEC2Scra</span>
</div>
<div class="cell" style="left:1308px;width:323px">
<span class="t" style="left:9.69px;top:17px;font-size:24px;line-height:24px;letter-spacing:0.591px;color:#ccccdc;-webkit-text-stroke:0.5px #ccccdc;">bs-otel-agent</span>
</div>
<div class="cell" style="left:1632px;width:322px">
</div>
<div class="cell last" style="left:1955px;width:323px">
<span class="t" style="left:279.09px;top:17px;font-size:24px;line-height:24px;letter-spacing:-0.283px;color:#ccccdc;-webkit-text-stroke:0.5px #ccccdc;">0 B</span>
</div>
</div>
<div class="ln" style="left:13px;top:398px;width:2265px;height:1px"></div>
<div class="row" style="top:399px;height:54px">
<div class="cell" style="left:13px;width:323px">
<span class="t" style="left:10.58px;top:17px;font-size:24px;line-height:24px;letter-spacing:0.309px;color:#ccccdc;-webkit-text-stroke:0.5px #ccccdc;">494614287886</span>
</div>
<div class="cell" style="left:337px;width:322px">
<span class="t" style="left:9.38px;top:17px;font-size:24px;line-height:24px;letter-spacing:0.872px;color:#6e9fff;-webkit-text-stroke:0.5px #6e9fff;">i-0e358dc2da9955470</span>
</div>
<div class="cell" style="left:660px;width:323px">
<span class="t" style="left:10.08px;top:17px;font-size:24px;line-height:24px;letter-spacing:0.380px;color:#6e9fff;-webkit-text-stroke:0.5px #6e9fff;">us-east-1</span>
</div>
<div class="cell" style="left:984px;width:323px">
<span class="t" style="left:9.79px;top:17px;font-size:24px;line-height:24px;letter-spacing:-0.722px;color:#ccccdc;-webkit-text-stroke:0.5px #ccccdc;">SEDemoGrafanaLabsEC2Scra</span>
</div>
<div class="cell" style="left:1308px;width:323px">
<span class="t" style="left:10.17px;top:17px;font-size:24px;line-height:24px;letter-spacing:0.567px;color:#ccccdc;-webkit-text-stroke:0.5px #ccccdc;">custom-branding-bs</span>
</div>
<div class="cell" style="left:1632px;width:322px">
</div>
<div class="cell last" style="left:1955px;width:323px">
<span class="t" style="left:279.09px;top:17px;font-size:24px;line-height:24px;letter-spacing:-0.283px;color:#ccccdc;-webkit-text-stroke:0.5px #ccccdc;">0 B</span>
</div>
</div>
<div class="bl" style="left:13px;top:453px;width:2264px;height:1px"></div>
<div class="bl" style="left:13px;top:464px;width:2265px;height:1px"></div>
<div class="dot" style="left:2277.5px;top:463.7px"></div>
</div>
</section>
<section class="panel" style="top:1148px">
<span class="t" style="left:12.46px;top:15px;font-size:24px;line-height:24px;letter-spacing:0.442px;color:#ccccdc;-webkit-text-stroke:0.9px #ccccdc;">Top 40 instances by cpu utilization avg</span>
<div class="tbl" style="height:465px">
<span class="t" style="left:22.25px;top:77px;font-size:24px;line-height:24px;letter-spacing:0.397px;color:#ccccdc;-webkit-text-stroke:0.9px #ccccdc;">account_id</span>
<svg class="ic" style="left:148.10px;top:77.10px" width="26.4" height="26.4" viewBox="0 0 24 24"><path fill="#8d8e9a" d="M19,2H5A3,3,0,0,0,2,5V6.17a3,3,0,0,0,.25,1.2l0,.06a2.81,2.81,0,0,0,.59.86L9,14.41V21a1,1,0,0,0,.47.85A1,1,0,0,0,10,22a1,1,0,0,0,.45-.11l4-2A1,1,0,0,0,15,19V14.41l6.12-6.12a2.81,2.81,0,0,0,.59-.86l0-.06A3,3,0,0,0,22,6.17V5A3,3,0,0,0,19,2ZM13.29,13.29A1,1,0,0,0,13,14v4.38l-2,1V14a1,1,0,0,0-.29-.71L5.41,8H18.59ZM20,6H4V5A1,1,0,0,1,5,4H19a1,1,0,0,1,1,1Z"/></svg>
<span class="t" style="left:345.89px;top:77px;font-size:24px;line-height:24px;letter-spacing:0.383px;color:#ccccdc;-webkit-text-stroke:0.9px #ccccdc;">Instance id</span>
<svg class="ic" style="left:472.00px;top:77.10px" width="26.4" height="26.4" viewBox="0 0 24 24"><path fill="#8d8e9a" d="M19,2H5A3,3,0,0,0,2,5V6.17a3,3,0,0,0,.25,1.2l0,.06a2.81,2.81,0,0,0,.59.86L9,14.41V21a1,1,0,0,0,.47.85A1,1,0,0,0,10,22a1,1,0,0,0,.45-.11l4-2A1,1,0,0,0,15,19V14.41l6.12-6.12a2.81,2.81,0,0,0,.59-.86l0-.06A3,3,0,0,0,22,6.17V5A3,3,0,0,0,19,2ZM13.29,13.29A1,1,0,0,0,13,14v4.38l-2,1V14a1,1,0,0,0-.29-.71L5.41,8H18.59ZM20,6H4V5A1,1,0,0,1,5,4H19a1,1,0,0,1,1,1Z"/></svg>
<span class="t" style="left:669.41px;top:77px;font-size:24px;line-height:24px;letter-spacing:0.660px;color:#ccccdc;-webkit-text-stroke:0.9px #ccccdc;">region</span>
<svg class="ic" style="left:745.60px;top:77.10px" width="26.4" height="26.4" viewBox="0 0 24 24"><path fill="#8d8e9a" d="M19,2H5A3,3,0,0,0,2,5V6.17a3,3,0,0,0,.25,1.2l0,.06a2.81,2.81,0,0,0,.59.86L9,14.41V21a1,1,0,0,0,.47.85A1,1,0,0,0,10,22a1,1,0,0,0,.45-.11l4-2A1,1,0,0,0,15,19V14.41l6.12-6.12a2.81,2.81,0,0,0,.59-.86l0-.06A3,3,0,0,0,22,6.17V5A3,3,0,0,0,19,2ZM13.29,13.29A1,1,0,0,0,13,14v4.38l-2,1V14a1,1,0,0,0-.29-.71L5.41,8H18.59ZM20,6H4V5A1,1,0,0,1,5,4H19a1,1,0,0,1,1,1Z"/></svg>
<span class="t" style="left:993.47px;top:77px;font-size:24px;line-height:24px;letter-spacing:0.440px;color:#ccccdc;-webkit-text-stroke:0.9px #ccccdc;">scrape_job</span>
<svg class="ic" style="left:1121.60px;top:77.10px" width="26.4" height="26.4" viewBox="0 0 24 24"><path fill="#8d8e9a" d="M19,2H5A3,3,0,0,0,2,5V6.17a3,3,0,0,0,.25,1.2l0,.06a2.81,2.81,0,0,0,.59.86L9,14.41V21a1,1,0,0,0,.47.85A1,1,0,0,0,10,22a1,1,0,0,0,.45-.11l4-2A1,1,0,0,0,15,19V14.41l6.12-6.12a2.81,2.81,0,0,0,.59-.86l0-.06A3,3,0,0,0,22,6.17V5A3,3,0,0,0,19,2ZM13.29,13.29A1,1,0,0,0,13,14v4.38l-2,1V14a1,1,0,0,0-.29-.71L5.41,8H18.59ZM20,6H4V5A1,1,0,0,1,5,4H19a1,1,0,0,1,1,1Z"/></svg>
<span class="t" style="left:1317.68px;top:77px;font-size:24px;line-height:24px;letter-spacing:-0.162px;color:#ccccdc;-webkit-text-stroke:0.9px #ccccdc;">tag_Name</span>
<svg class="ic" style="left:1434.10px;top:77.10px" width="26.4" height="26.4" viewBox="0 0 24 24"><path fill="#8d8e9a" d="M19,2H5A3,3,0,0,0,2,5V6.17a3,3,0,0,0,.25,1.2l0,.06a2.81,2.81,0,0,0,.59.86L9,14.41V21a1,1,0,0,0,.47.85A1,1,0,0,0,10,22a1,1,0,0,0,.45-.11l4-2A1,1,0,0,0,15,19V14.41l6.12-6.12a2.81,2.81,0,0,0,.59-.86l0-.06A3,3,0,0,0,22,6.17V5A3,3,0,0,0,19,2ZM13.29,13.29A1,1,0,0,0,13,14v4.38l-2,1V14a1,1,0,0,0-.29-.71L5.41,8H18.59ZM20,6H4V5A1,1,0,0,1,5,4H19a1,1,0,0,1,1,1Z"/></svg>
<span class="t" style="left:1641.43px;top:77px;font-size:24px;line-height:24px;letter-spacing:0.258px;color:#ccccdc;-webkit-text-stroke:0.9px #ccccdc;">AutoscallingGroupName</span>
<svg class="ic" style="left:1913.40px;top:77.10px" width="26.4" height="26.4" viewBox="0 0 24 24"><path fill="#8d8e9a" d="M19,2H5A3,3,0,0,0,2,5V6.17a3,3,0,0,0,.25,1.2l0,.06a2.81,2.81,0,0,0,.59.86L9,14.41V21a1,1,0,0,0,.47.85A1,1,0,0,0,10,22a1,1,0,0,0,.45-.11l4-2A1,1,0,0,0,15,19V14.41l6.12-6.12a2.81,2.81,0,0,0,.59-.86l0-.06A3,3,0,0,0,22,6.17V5A3,3,0,0,0,19,2ZM13.29,13.29A1,1,0,0,0,13,14v4.38l-2,1V14a1,1,0,0,0-.29-.71L5.41,8H18.59ZM20,6H4V5A1,1,0,0,1,5,4H19a1,1,0,0,1,1,1Z"/></svg>
<span class="t" style="left:2142.42px;top:77px;font-size:24px;line-height:24px;letter-spacing:0.003px;color:#ccccdc;-webkit-text-stroke:0.9px #ccccdc;">Value</span>
<svg class="ic" style="left:2209.00px;top:73.20px" width="28.8" height="28.8" viewBox="0 0 24 24"><path fill="#ccccdc" d="M17.71,11.29a1,1,0,0,0-1.42,0L13,14.59V7a1,1,0,0,0-2,0v7.59l-3.29-3.3a1,1,0,0,0-1.42,1.42l5,5a1,1,0,0,0,.33.21.94.94,0,0,0,.76,0,1,1,0,0,0,.33-.21l5-5A1,1,0,0,0,17.71,11.29Z"/></svg>
<svg class="ic" style="left:2243.50px;top:77.10px" width="26.4" height="26.4" viewBox="0 0 24 24"><path fill="#8d8e9a" d="M19,2H5A3,3,0,0,0,2,5V6.17a3,3,0,0,0,.25,1.2l0,.06a2.81,2.81,0,0,0,.59.86L9,14.41V21a1,1,0,0,0,.47.85A1,1,0,0,0,10,22a1,1,0,0,0,.45-.11l4-2A1,1,0,0,0,15,19V14.41l6.12-6.12a2.81,2.81,0,0,0,.59-.86l0-.06A3,3,0,0,0,22,6.17V5A3,3,0,0,0,19,2ZM13.29,13.29A1,1,0,0,0,13,14v4.38l-2,1V14a1,1,0,0,0-.29-.71L5.41,8H18.59ZM20,6H4V5A1,1,0,0,1,5,4H19a1,1,0,0,1,1,1Z"/></svg>
<div class="ln" style="left:13px;top:110px;width:2265px;height:1px"></div>
<div class="row" style="top:111px;height:57px">
<div class="cell" style="left:13px;width:323px">
<span class="t" style="left:10.58px;top:17px;font-size:24px;line-height:24px;letter-spacing:0.309px;color:#ccccdc;-webkit-text-stroke:0.5px #ccccdc;">494614287886</span>
</div>
<div class="cell" style="left:337px;width:322px">
<span class="t" style="left:9.38px;top:17px;font-size:24px;line-height:24px;letter-spacing:0.672px;color:#6e9fff;-webkit-text-stroke:0.5px #6e9fff;">i-08c0e67822fdb1cbb</span>
</div>
<div class="cell" style="left:660px;width:323px">
<span class="t" style="left:10.08px;top:17px;font-size:24px;line-height:24px;letter-spacing:0.380px;color:#6e9fff;-webkit-text-stroke:0.5px #6e9fff;">us-east-1</span>
</div>
<div class="cell" style="left:984px;width:323px">
<span class="t" style="left:9.79px;top:17px;font-size:24px;line-height:24px;letter-spacing:-0.722px;color:#ccccdc;-webkit-text-stroke:0.5px #ccccdc;">SEDemoGrafanaLabsEC2Scra</span>
</div>
<div class="cell" style="left:1308px;width:323px">
<span class="t" style="left:9.28px;top:17px;font-size:24px;line-height:24px;letter-spacing:-0.217px;color:#ccccdc;-webkit-text-stroke:0.5px #ccccdc;">ECS Instance - EC2Container</span>
</div>
<div class="cell" style="left:1632px;width:322px">
<span class="t" style="left:9.08px;top:17px;font-size:24px;line-height:24px;letter-spacing:0.208px;color:#ccccdc;-webkit-text-stroke:0.5px #ccccdc;">EC2ContainerService-fargate</span>
</div>
<div class="cell last" style="left:1955px;width:323px">
<span class="t" style="left:230.18px;top:17px;font-size:24px;line-height:24px;letter-spacing:-0.398px;color:#ccccdc;-webkit-text-stroke:0.5px #ccccdc;">44.5%</span>
<div class="fill" style="left:10px;top:10px;width:190px;height:36px"><i></i></div>
</div>
</div>
<div class="ln" style="left:13px;top:168px;width:2265px;height:1px"></div>
<div class="row" style="top:169px;height:56px">
<div class="cell" style="left:13px;width:323px">
<span class="t" style="left:10.58px;top:17px;font-size:24px;line-height:24px;letter-spacing:0.309px;color:#ccccdc;-webkit-text-stroke:0.5px #ccccdc;">494614287886</span>
</div>
<div class="cell" style="left:337px;width:322px">
<span class="t" style="left:9.38px;top:17px;font-size:24px;line-height:24px;letter-spacing:0.293px;color:#6e9fff;-webkit-text-stroke:0.5px #6e9fff;">i-0f805bb91a65101b4</span>
</div>
<div class="cell" style="left:660px;width:323px">
<span class="t" style="left:10.08px;top:17px;font-size:24px;line-height:24px;letter-spacing:0.380px;color:#6e9fff;-webkit-text-stroke:0.5px #6e9fff;">us-east-1</span>
</div>
<div class="cell" style="left:984px;width:323px">
<span class="t" style="left:9.79px;top:17px;font-size:24px;line-height:24px;letter-spacing:-0.722px;color:#ccccdc;-webkit-text-stroke:0.5px #ccccdc;">SEDemoGrafanaLabsEC2Scra</span>
</div>
<div class="cell" style="left:1308px;width:323px">
<span class="t" style="left:9.28px;top:17px;font-size:24px;line-height:24px;letter-spacing:-0.217px;color:#ccccdc;-webkit-text-stroke:0.5px #ccccdc;">ECS Instance - EC2Container</span>
</div>
<div class="cell" style="left:1632px;width:322px">
<span class="t" style="left:9.08px;top:17px;font-size:24px;line-height:24px;letter-spacing:0.208px;color:#ccccdc;-webkit-text-stroke:0.5px #ccccdc;">EC2ContainerService-fargate</span>
</div>
<div class="cell last" style="left:1955px;width:323px">
<span class="t" style="left:230.14px;top:17px;font-size:24px;line-height:24px;letter-spacing:-0.386px;color:#ccccdc;-webkit-text-stroke:0.5px #ccccdc;">3.88%</span>
<div class="trk" style="left:10px;top:10px;width:185px;height:36px"></div>
<div class="fill" style="left:10px;top:10px;width:17px;height:36px"><i></i></div>
</div>
</div>
<div class="ln" style="left:13px;top:225px;width:2265px;height:1px"></div>
<div class="row" style="top:226px;height:57px">
<div class="cell" style="left:13px;width:323px">
<span class="t" style="left:10.58px;top:17px;font-size:24px;line-height:24px;letter-spacing:0.309px;color:#ccccdc;-webkit-text-stroke:0.5px #ccccdc;">494614287886</span>
</div>
<div class="cell" style="left:337px;width:322px">
<span class="t" style="left:9.38px;top:17px;font-size:24px;line-height:24px;letter-spacing:0.808px;color:#6e9fff;-webkit-text-stroke:0.5px #6e9fff;">i-0862eca892de64efa</span>
</div>
<div class="cell" style="left:660px;width:323px">
<span class="t" style="left:10.08px;top:17px;font-size:24px;line-height:24px;letter-spacing:0.380px;color:#6e9fff;-webkit-text-stroke:0.5px #6e9fff;">us-east-1</span>
</div>
<div class="cell" style="left:984px;width:323px">
<span class="t" style="left:9.79px;top:17px;font-size:24px;line-height:24px;letter-spacing:-0.722px;color:#ccccdc;-webkit-text-stroke:0.5px #ccccdc;">SEDemoGrafanaLabsEC2Scra</span>
</div>
<div class="cell" style="left:1308px;width:323px">
<span class="t" style="left:9.28px;top:17px;font-size:24px;line-height:24px;letter-spacing:-0.217px;color:#ccccdc;-webkit-text-stroke:0.5px #ccccdc;">ECS Instance - EC2Container</span>
</div>
<div class="cell" style="left:1632px;width:322px">
<span class="t" style="left:9.08px;top:17px;font-size:24px;line-height:24px;letter-spacing:0.208px;color:#ccccdc;-webkit-text-stroke:0.5px #ccccdc;">EC2ContainerService-fargate</span>
</div>
<div class="cell last" style="left:1955px;width:323px">
<span class="t" style="left:231.14px;top:17px;font-size:24px;line-height:24px;letter-spacing:-0.636px;color:#ccccdc;-webkit-text-stroke:0.5px #ccccdc;">2.67%</span>
<div class="trk" style="left:10px;top:10px;width:185px;height:36px"></div>
<div class="fill" style="left:10px;top:10px;width:11px;height:36px"><i></i></div>
</div>
</div>
<div class="ln" style="left:13px;top:283px;width:2265px;height:1px"></div>
<div class="row" style="top:284px;height:56px">
<div class="cell" style="left:13px;width:323px">
<span class="t" style="left:9.72px;top:17px;font-size:24px;line-height:24px;letter-spacing:-0.185px;color:#ccccdc;-webkit-text-stroke:0.5px #ccccdc;">974410390816</span>
</div>
<div class="cell" style="left:337px;width:322px">
<span class="t" style="left:9.38px;top:17px;font-size:24px;line-height:24px;letter-spacing:0.459px;color:#6e9fff;-webkit-text-stroke:0.5px #6e9fff;">i-0a2772858be01d567</span>
</div>
<div class="cell" style="left:660px;width:323px">
<span class="t" style="left:10.08px;top:17px;font-size:24px;line-height:24px;letter-spacing:0.857px;color:#6e9fff;-webkit-text-stroke:0.5px #6e9fff;">us-east-2</span>
</div>
<div class="cell" style="left:984px;width:323px">
<span class="t" style="left:9.79px;top:17px;font-size:24px;line-height:24px;letter-spacing:0.206px;color:#ccccdc;-webkit-text-stroke:0.5px #ccccdc;">SEDemo-Hashicups-Consul-</span>
</div>
<div class="cell" style="left:1308px;width:323px">
<span class="t" style="left:9.64px;top:17px;font-size:24px;line-height:24px;letter-spacing:0.462px;color:#ccccdc;-webkit-text-stroke:0.5px #ccccdc;">hashicups-api</span>
</div>
<div class="cell" style="left:1632px;width:322px">
</div>
<div class="cell last" style="left:1955px;width:323px">
<span class="t" style="left:215.79px;top:17px;font-size:24px;line-height:24px;letter-spacing:-0.073px;color:#ccccdc;-webkit-text-stroke:0.5px #ccccdc;">0.833%</span>
<div class="trk" style="left:10px;top:10px;width:185px;height:36px"></div>
<div class="fill" style="left:10px;top:10px;width:4.3px;height:36px"><i></i></div>
</div>
</div>
<div class="ln" style="left:13px;top:340px;width:2265px;height:1px"></div>
<div class="row" style="top:341px;height:57px">
<div class="cell" style="left:13px;width:323px">
<span class="t" style="left:9.72px;top:17px;font-size:24px;line-height:24px;letter-spacing:-0.185px;color:#ccccdc;-webkit-text-stroke:0.5px #ccccdc;">974410390816</span>
</div>
<div class="cell" style="left:337px;width:322px">
<span class="t" style="left:9.38px;top:17px;font-size:24px;line-height:24px;letter-spacing:0.416px;color:#6e9fff;-webkit-text-stroke:0.5px #6e9fff;">i-0b12180a0ccdbc729</span>
</div>
<div class="cell" style="left:660px;width:323px">
<span class="t" style="left:10.08px;top:17px;font-size:24px;line-height:24px;letter-spacing:0.857px;color:#6e9fff;-webkit-text-stroke:0.5px #6e9fff;">us-east-2</span>
</div>
<div class="cell" style="left:984px;width:323px">
<span class="t" style="left:9.79px;top:17px;font-size:24px;line-height:24px;letter-spacing:0.206px;color:#ccccdc;-webkit-text-stroke:0.5px #ccccdc;">SEDemo-Hashicups-Consul-</span>
</div>
<div class="cell" style="left:1308px;width:323px">
<span class="t" style="left:10.17px;top:17px;font-size:24px;line-height:24px;letter-spacing:0.607px;color:#ccccdc;-webkit-text-stroke:0.5px #ccccdc;">consul-server-0</span>
</div>
<div class="cell" style="left:1632px;width:322px">
</div>
<div class="cell last" style="left:1955px;width:323px">
<span class="t" style="left:217.09px;top:17px;font-size:24px;line-height:24px;letter-spacing:-0.333px;color:#ccccdc;-webkit-text-stroke:0.5px #ccccdc;">0.670%</span>
<div class="trk" style="left:10px;top:10px;width:185px;height:36px"></div>
<div class="fill" style="left:10px;top:10px;width:3.2px;height:36px"><i></i></div>
</div>
</div>
<div class="ln" style="left:13px;top:398px;width:2265px;height:1px"></div>
<div class="row" style="top:399px;height:54px">
<div class="cell" style="left:13px;width:323px">
<span class="t" style="left:9.72px;top:17px;font-size:24px;line-height:24px;letter-spacing:-0.185px;color:#ccccdc;-webkit-text-stroke:0.5px #ccccdc;">974410390816</span>
</div>
<div class="cell" style="left:337px;width:322px">
<span class="t" style="left:9.38px;top:17px;font-size:24px;line-height:24px;letter-spacing:0.834px;color:#6e9fff;-webkit-text-stroke:0.5px #6e9fff;">i-08302d548f1a9db08</span>
</div>
<div class="cell" style="left:660px;width:323px">
<span class="t" style="left:10.08px;top:17px;font-size:24px;line-height:24px;letter-spacing:0.857px;color:#6e9fff;-webkit-text-stroke:0.5px #6e9fff;">us-east-2</span>
</div>
<div class="cell" style="left:984px;width:323px">
<span class="t" style="left:9.79px;top:17px;font-size:24px;line-height:24px;letter-spacing:0.206px;color:#ccccdc;-webkit-text-stroke:0.5px #ccccdc;">SEDemo-Hashicups-Consul-</span>
</div>
<div class="cell" style="left:1308px;width:323px">
<span class="t" style="left:10.18px;top:17px;font-size:24px;line-height:24px;letter-spacing:0.410px;color:#ccccdc;-webkit-text-stroke:0.5px #ccccdc;">gateway-api</span>
</div>
<div class="cell" style="left:1632px;width:322px">
</div>
<div class="cell last" style="left:1955px;width:323px">
<span class="t" style="left:216.09px;top:17px;font-size:24px;line-height:24px;letter-spacing:-0.133px;color:#ccccdc;-webkit-text-stroke:0.5px #ccccdc;">0.635%</span>
<div class="trk" style="left:10px;top:10px;width:185px;height:36px"></div>
<div class="fill" style="left:10px;top:10px;width:3.2px;height:36px"><i></i></div>
</div>
</div>
<div class="bl" style="left:13px;top:453px;width:2264px;height:1px"></div>
<div class="bl" style="left:13px;top:464px;width:2265px;height:1px"></div>
<div class="dot" style="left:2277.5px;top:463.7px"></div>
</div>
</section>
</div>
</body></html>
